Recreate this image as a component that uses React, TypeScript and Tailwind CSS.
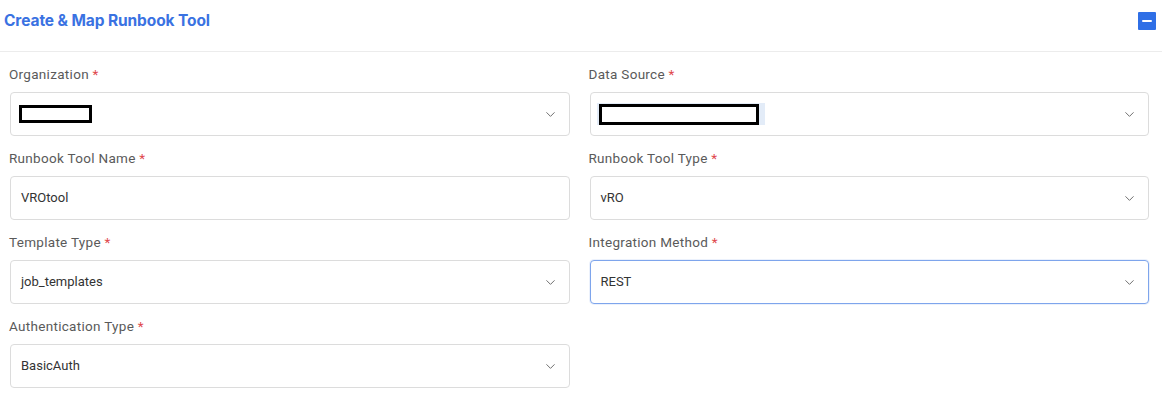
import { ChevronDown } from "lucide-react";

const font = { fontFamily: "Roboto, 'Liberation Sans', sans-serif" };

const Field = ({ label, children, focused, select = true }: any) => {
  return (
    <div className="flex flex-col">
      <label className="text-[13.5px] leading-[18px] tracking-[0.3px] text-[#5a5a5a] mb-[9px] -ml-[1px]">
        {label} <span className="text-[#e0474c]">*</span>
      </label>
      <div
        className={
          focused
            ? "h-[44px] rounded-[4px] border border-[#7ea5ec] bg-white flex items-center pl-[10px] pr-[11px] shadow-[0_0_0_1px_rgba(120,160,235,0.15)]"
            : "h-[44px] rounded-[4px] border border-[#dcdcdc] bg-white flex items-center pl-[10px] pr-[11px]"
        }
      >
        <div className="flex-1 text-[13px] text-[#333] flex items-center">{children}</div>
        {select && <ChevronDown size={15} strokeWidth={1.6} className="text-[#6f6f6f]" />}
      </div>
    </div>
  );
};

export default function App() {
  return (
    <div className="w-[1174px] h-[394px] bg-white overflow-hidden" style={font}>
      <div className="h-[52px] flex items-center justify-between pl-[4px] pr-[6px] pb-[9px] border-b border-[#ececec] mr-[12px]">
        <h2
          className="text-[15.5px] font-bold text-[#3a72e2] tracking-[-0.1px]"
          style={{ fontFamily: "Inter, 'Open Sans', sans-serif" }}
        >
          Create &amp; Map Runbook Tool
        </h2>
        <button className="w-[18px] h-[18px] bg-[#2f6fe6] rounded-[1px] flex items-center justify-center">
          <span className="block w-[10px] h-[2.5px] bg-white rounded-full" />
        </button>
      </div>

      <div className="grid grid-cols-2 gap-x-[20px] gap-y-[13px] pl-[10px] pr-[25px] pt-[13px]">
        <Field label="Organization">
          <span className="ml-[-2px] inline-block w-[73px] h-[18px] border-[3px] border-black bg-white" />
        </Field>
        <Field label="Data Source">
          <span className="ml-[-4px] inline-flex items-center bg-[#e3ecf8] h-[22px] pl-[2px] pr-[6px]">
            <span className="inline-block w-[160px] h-[21px] border-[3px] border-black bg-white" />
          </span>
        </Field>
        <Field label="Runbook Tool Name" select={false}>
          VROtool
        </Field>
        <Field label="Runbook Tool Type">vRO</Field>
        <Field label="Template Type">job_templates</Field>
        <Field label="Integration Method" focused>
          REST
        </Field>
        <Field label="Authentication Type">BasicAuth</Field>
      </div>
    </div>
  );
}
